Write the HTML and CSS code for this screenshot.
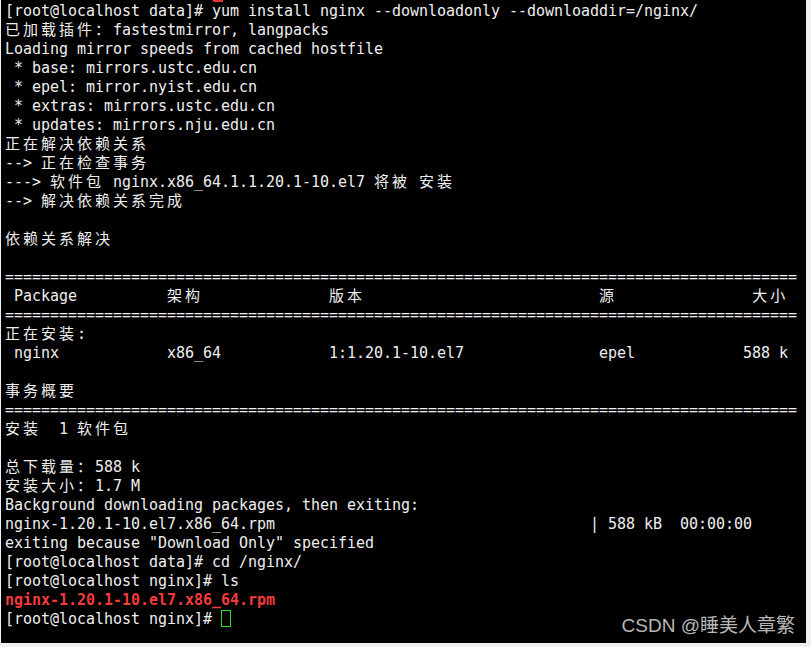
FILE: index.html
```html
<!DOCTYPE html>
<html lang="zh-CN">
<head>
<meta charset="utf-8">
<title>yum install nginx --downloadonly</title>
<link rel="stylesheet" href="styles.css">
</head>
<body>
<div class="screen">
<span class="top-mark"></span>
<pre class="term">[root@localhost data]# yum install nginx --downloadonly --downloaddir=/nginx/
<span class="w">已加载插件：</span>fastestmirror, langpacks
Loading mirror speeds from cached hostfile
 * base: mirrors.ustc.edu.cn
 * epel: mirror.nyist.edu.cn
 * extras: mirrors.ustc.edu.cn
 * updates: mirrors.nju.edu.cn
<span class="w">正在解决依赖关系</span>
--&gt; <span class="w">正在检查事务</span>
---&gt; <span class="w">软件包</span> nginx.x86_64.1.1.20.1-10.el7 <span class="w">将被</span> <span class="w">安装</span>
--&gt; <span class="w">解决依赖关系完成</span>

<span class="w">依赖关系解决</span>

========================================================================================
 Package          <span class="w">架构</span>              <span class="w">版本</span>                          <span class="w">源</span>               <span class="w">大小</span>
========================================================================================
<span class="w">正在安装</span>:
 nginx            x86_64            1:1.20.1-10.el7               epel            588 k

<span class="w">事务概要</span>
========================================================================================
<span class="w">安装</span>  1 <span class="w">软件包</span>

<span class="w">总下载量：</span>588 k
<span class="w">安装大小：</span>1.7 M
Background downloading packages, then exiting:
nginx-1.20.1-10.el7.x86_64.rpm                                   | 588 kB  00:00:00
exiting because "Download Only" specified
[root@localhost data]# cd /nginx/
[root@localhost nginx]# ls
<span class="r">nginx-1.20.1-10.el7.x86_64.rpm</span>
[root@localhost nginx]# <span class="cur"></span></pre>
<div class="mark">CSDN @睡美人章繁</div>
</div>
</body>
</html>
```
FILE: styles.css
```css
html, body {
  margin: 0;
  padding: 0;
  background: #f0f0f0;
}

.screen {
  position: relative;
  width: 805px;
  height: 643px;
  margin-left: 1px;
  background: #000;
  overflow: hidden;
}

.term {
  margin: 0;
  padding: 2px 0 0 4px;
  font-family: "DejaVu Sans Mono", "Noto Sans CJK SC", monospace;
  font-size: 15px;
  line-height: 19px;
  letter-spacing: -0.03px;
  color: #efefef;
  white-space: pre;
}

.w {
  font-family: "Noto Sans CJK SC", sans-serif;
  letter-spacing: 3px;
  line-height: 1;
}

.r {
  color: #f23c3c;
  font-weight: bold;
}

.cur {
  display: inline-block;
  box-sizing: border-box;
  width: 10px;
  height: 17px;
  margin-top: 0;
  vertical-align: top;
  border: 1px solid #22e022;
}

.top-mark {
  position: absolute;
  left: 212px;
  top: 0;
  width: 10px;
  height: 2px;
  background: #e03434;
}

.mark {
  position: absolute;
  right: 11px;
  top: 616px;
  font-family: "Liberation Sans", "Noto Sans CJK SC", sans-serif;
  font-size: 19px;
  line-height: 19px;
  color: #b8b8b8;
  white-space: nowrap;
}
```
